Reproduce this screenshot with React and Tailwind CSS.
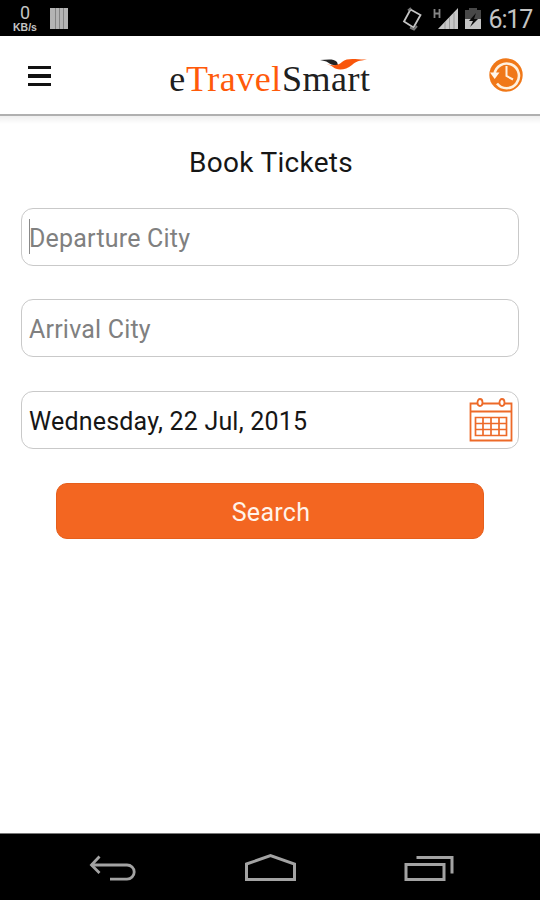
import React, { useState } from "react";

const StatusBar = () => (
    <div className="flex h-[36px] items-center justify-between bg-black text-[#c4c4c4]">
        <div className="flex items-center pl-[12px]">
            <div className="flex w-[26px] flex-col items-center pt-[2px]">
                <span className="h-[16px] text-[18px] leading-[16px]">0</span>
                <span className="h-[12px] font-['Liberation_Sans',sans-serif] text-[10.5px] font-bold leading-[12px]">KB/s</span>
            </div>
            <svg width="18" height="22" viewBox="0 0 18 22" className="ml-[12px]">
                <rect width="18" height="21" y="1" fill="#b4b4b4" />
                <path d="M5.5 1V22M9.5 1V22M13.5 1V22" stroke="#848484" />
            </svg>
        </div>
        <div className="flex items-center pr-[8px] pt-px">
            <svg width="22" height="25" viewBox="0 0 22 25" fill="none">
                <path d="M9.5 3.5L19.5 9L12.5 21.5L3 15.5Z" stroke="#c4c4c4" strokeWidth="1.8" />
                <path d="M7 4.5L10 2M9 21.5L13 23.5L16 20" stroke="#777" strokeWidth="2" />
            </svg>
            <svg width="26" height="24" viewBox="0 0 26 24" className="ml-[10px]">
                <path d="M1.5 2V11M6.5 2V11M1.5 6.5H6.5" stroke="#858585" strokeWidth="1.8" />
                <path d="M25 1V22H5Z" fill="#c8c8c8" />
                <path d="M12 15V22M16.5 10V22M21 6V22" stroke="#9a9a9a" />
            </svg>
            <svg width="16" height="24" viewBox="0 0 16 24" className="ml-[6px]">
                <path d="M0 3H4V1H12V3H16V12H0Z" fill="#484848" />
                <path d="M0 12H16V22H0Z" fill="#c4c4c4" />
                <path d="M11 6L4 14H8L5 20L13 12H9Z" fill="#0a0a0a" />
            </svg>
            <span className="ml-[8px] pt-px text-[25px] leading-[35px] tracking-[-1.2px]">6:17</span>
        </div>
    </div>
);

const Logo = () => (
    <div className="relative top-[4px] font-['Liberation_Serif',serif] text-[36px] leading-[40px] tracking-[0.55px] text-[#202020]">
        e<span className="text-[#ff5a0a]">Travel</span>Smart
        <svg width="48" height="13" viewBox="0 0 48 13" className="absolute left-[151px] top-[-1px]">
            <path d="M0 2C6 2 13 0 17 4L18 7C14 7.5 10 6.5 8 4.5C6 3 3 3 0 2Z" fill="#242424" />
            <path d="M7 6C12 8 18 8 22 4C28 -1 37 2 47 1.5C39 3 36 3 32 7C25 13 16 12 13 9C11 7.500 9 7 7 6Z" fill="#f9560b" />
        </svg>
    </div>
);

const HistoryIcon = () => (
    <svg width="34" height="34" viewBox="0 0 34 34" fill="none">
        <circle cx="17" cy="17" r="16.7" fill="#f07818" />
        <path d="M5.5 16A12.3 12.3 0 1 1 8 25.5" stroke="#fff1df" strokeWidth="2.6" />
        <path d="M1 14.5H10.5L5.7 21Z" fill="#fff6ec" />
        <path d="M17.5 8V18L24 21.5" stroke="#fff1df" strokeWidth="2" />
    </svg>
);

const CalendarIcon = () => (
    <svg width="44" height="44" viewBox="0 0 44 44" fill="none" stroke="#ed6a29">
        <path d="M8 5.5H1.5V42.5H42.5V5.5H36M14 5.5H30" strokeWidth="1.8" />
        <path d="M1 13.5H43" strokeWidth="1.8" />
        <ellipse cx="11" cy="4.5" rx="2.5" ry="3.5" strokeWidth="1.8" />
        <ellipse cx="33" cy="4.5" rx="2.5" ry="3.5" strokeWidth="1.8" />
        <path d="M6.500 19.5H37.5V37.5H6.500ZM6.500 25.5H37.5M6.500 31.5H37.5M14 19.5V37.5M22 19.5V37.5M30 19.5V37.5" strokeWidth="1.7" />
    </svg>
);

const NavBar = () => (
    <div className="flex h-[67px] items-center justify-between border-t border-[#777] bg-black pl-[88px] pr-[86px] pt-[2px]">
        <svg width="48" height="28" viewBox="0 0 48 28" fill="none" stroke="#a3a3a3" strokeWidth="2.8">
            <path d="M11.5 2.5L3.5 11L11.5 19" />
            <path d="M3 11H39C43 11 46.2 14 46.2 18C46.2 22 43 25.2 39 25.2H22" />
        </svg>
        <svg width="52" height="28" viewBox="0 0 52 28" fill="none" stroke="#a3a3a3" strokeWidth="3">
            <path d="M2.5 10L26.500 1.7L50.5 10V25.5H2.5Z" />
        </svg>
        <svg width="50" height="28" viewBox="0 0 50 28" fill="none" stroke="#a3a3a3" strokeWidth="3">
            <path d="M2 10.5H40V25.5H2ZM12.500 3.5H48V19.5" />
        </svg>
    </div>
);

const fieldClass = "h-[58px] w-full rounded-[12px] border-[1.5px] border-[#c9c9c9] bg-white pl-[7px] pt-[2px] text-[25px] tracking-[0.2px] text-[#161616] outline-none placeholder:text-[#808080] placeholder:opacity-100";

const App = () => {
    const [form, setForm] = useState({ departure: "", arrival: "", date: "Wednesday, 22 Jul, 2015" });

    const handleChange = (e) => {
        setForm({ ...form, [e.target.name]: e.target.value });
    };

    return (
        <main className="flex h-[900px] w-[540px] flex-col overflow-hidden bg-white font-[Roboto,sans-serif]">
            <StatusBar />
            <header className="flex h-[80px] items-center justify-between border-b-2 border-[#b0b0b0] pl-[28px] pr-[17px]">
                <button type="button" aria-label="Menu" className="flex w-[23px] flex-col gap-[5px] pt-[2px]">
                    <span className="h-[3px] bg-[#111]"></span>
                    <span className="h-[4px] bg-[#111]"></span>
                    <span className="h-[3px] bg-[#111]"></span>
                </button>
                <Logo />
                <HistoryIcon />
            </header>
            <div className="h-[8px] bg-gradient-to-b from-[#efefef] to-white"></div>
            <form onSubmit={(e) => e.preventDefault()} className="flex flex-1 flex-col px-[21px]">
                <h1 className="mt-[21px] h-[36px] pl-[2px] text-center text-[28px] leading-[36px] tracking-[0.3px] text-[#161616]">Book Tickets</h1>
                <div className="relative mt-[27px]">
                    <input type="text" name="departure" placeholder="Departure City" value={form.departure} onChange={handleChange} className={fieldClass} />
                    <span className="absolute left-[8px] top-[11px] h-[35px] w-px bg-[#8a8a8a]"></span>
                </div>
                <input type="text" name="arrival" placeholder="Arrival City" value={form.arrival} onChange={handleChange} className={`mt-[33px] ${fieldClass}`} />
                <div className="relative mt-[34px]">
                    <input type="text" name="date" value={form.date} onChange={handleChange} className={fieldClass} />
                    <div className="absolute right-[6px] top-[7px]">
                        <CalendarIcon />
                    </div>
                </div>
                <button type="submit" className="mx-[35px] mt-[34px] h-[56px] rounded-[11px] border border-[#e65f1c] bg-[#f36621] pl-[2px] pt-[3px] text-[25px] tracking-[0.3px] text-[#fff3ea]">Search</button>
            </form>
            <NavBar />
        </main>
    );
};

export default App;
